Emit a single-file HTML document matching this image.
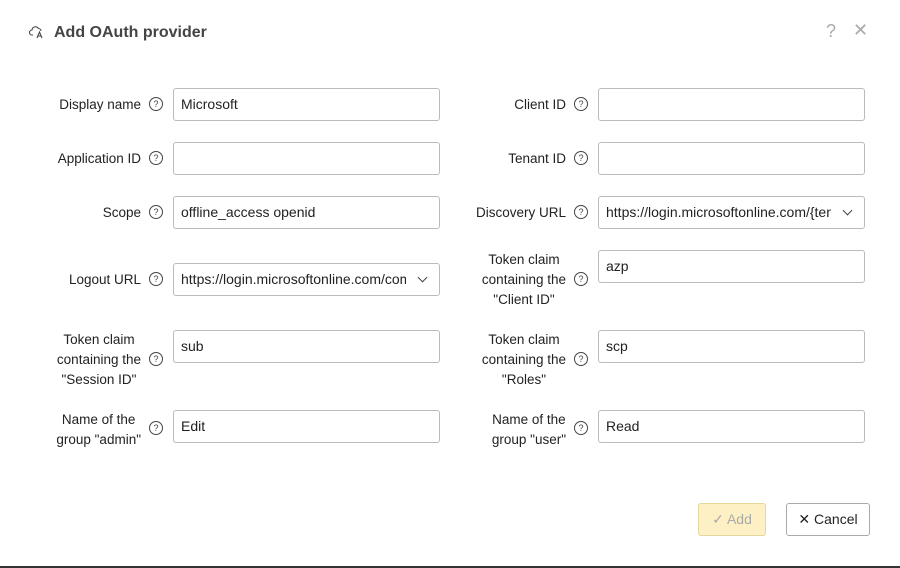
<!DOCTYPE html>
<html><head><style>
body{margin:0;width:900px;height:568px;background:#fff;font-family:"Liberation Sans",sans-serif;position:relative;overflow:hidden;color:#222}
.abs{position:absolute}
.t{font-size:16px;font-weight:bold;color:#444;left:54px;top:24px}
.lab{position:absolute;font-size:13.5px;text-align:right;line-height:20px;color:#222}
.q{position:absolute;width:12px;height:12px;border:1.2px solid #444;border-radius:50%;font-size:9px;line-height:12px;text-align:center;color:#444}
.in{position:absolute;width:267px;height:33px;border:1px solid #bbb;border-radius:3px;box-sizing:border-box;font-size:14px;line-height:31px;padding-left:7px;white-space:nowrap;overflow:hidden;background:#fff}
.in .tx{display:inline-block;width:225px;overflow:hidden;vertical-align:top}
.chev{position:absolute;right:13px;top:10px;width:6px;height:6px;border-right:1.3px solid #444;border-bottom:1.3px solid #444;transform:rotate(45deg)}
.btn{position:absolute;height:33px;border-radius:3px;box-sizing:border-box;font-size:14px;line-height:31px;text-align:center}
</style></head><body>
<svg class="abs" style="left:29px;top:25px" width="16" height="14" viewBox="0 0 16 14" fill="none" stroke="#444" stroke-width="1.1"><path d="M4 10H3a2.5 2.5 0 0 1 0-5 3.5 3.5 0 0 1 6.5-1.5A2.5 2.5 0 0 1 12 6"/><path d="M8 13l2.5-6 2.5 6M9 11h3"/></svg>
<div class="abs t">Add OAuth provider</div>
<div class="abs" style="left:826px;top:21px;font-size:18px;color:#aaa">?</div>
<div class="abs" style="left:853px;top:20px;font-size:18px;color:#aaa">✕</div>

<div class="lab" style="right:759px;top:95px">Display name</div><div class="q" style="left:149px;top:97px">?</div><div class="in" style="left:173px;top:88px">Microsoft</div>
<div class="lab" style="right:334px;top:95px">Client ID</div><div class="q" style="left:574px;top:97px">?</div><div class="in" style="left:598px;top:88px"></div>

<div class="lab" style="right:759px;top:149px">Application ID</div><div class="q" style="left:149px;top:151px">?</div><div class="in" style="left:173px;top:142px"></div>
<div class="lab" style="right:334px;top:149px">Tenant ID</div><div class="q" style="left:574px;top:151px">?</div><div class="in" style="left:598px;top:142px"></div>

<div class="lab" style="right:759px;top:203px">Scope</div><div class="q" style="left:149px;top:205px">?</div><div class="in" style="left:173px;top:196px">offline_access openid</div>
<div class="lab" style="right:334px;top:203px">Discovery URL</div><div class="q" style="left:574px;top:205px">?</div><div class="in" style="left:598px;top:196px"><span class="tx">https://login.microsoftonline.com/{tenant}</span><span class="chev"></span></div>

<div class="lab" style="right:759px;top:270px">Logout URL</div><div class="q" style="left:149px;top:272px">?</div><div class="in" style="left:173px;top:263px"><span class="tx">https://login.microsoftonline.com/common</span><span class="chev"></span></div>
<div class="lab" style="right:334px;top:250px;text-align:center">Token claim<br>containing the<br>"Client ID"</div><div class="q" style="left:574px;top:272px">?</div><div class="in" style="left:598px;top:250px">azp</div>

<div class="lab" style="right:759px;top:330px;text-align:center">Token claim<br>containing the<br>"Session ID"</div><div class="q" style="left:149px;top:352px">?</div><div class="in" style="left:173px;top:330px">sub</div>
<div class="lab" style="right:334px;top:330px;text-align:center">Token claim<br>containing the<br>"Roles"</div><div class="q" style="left:574px;top:352px">?</div><div class="in" style="left:598px;top:330px">scp</div>

<div class="lab" style="right:759px;top:410px;text-align:center">Name of the<br>group "admin"</div><div class="q" style="left:149px;top:421px">?</div><div class="in" style="left:173px;top:410px">Edit</div>
<div class="lab" style="right:334px;top:410px;text-align:center">Name of the<br>group "user"</div><div class="q" style="left:574px;top:421px">?</div><div class="in" style="left:598px;top:410px">Read</div>

<div class="btn" style="left:698px;top:503px;width:68px;background:#fdf0c4;border:1px solid #e6d69a;color:#aaa">✓ Add</div>
<div class="btn" style="left:786px;top:503px;width:84px;background:#fff;border:1px solid #aaa;color:#222">✕ Cancel</div>
<div class="abs" style="left:0;top:566px;width:900px;height:2px;background:#333"></div>
</body></html>
